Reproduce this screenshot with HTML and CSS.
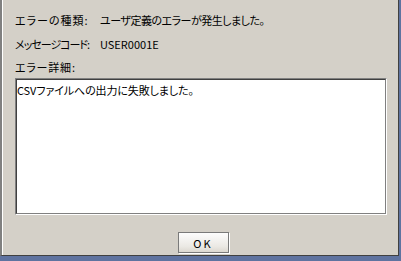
FILE: index.html
```html
<!DOCTYPE html>
<html lang="ja">
<head>
    <meta charset="UTF-8">
    <meta name="viewport" content="width=device-width, initial-scale=1.0">
    <title>エラー</title>
    <link rel="stylesheet" href="styles.css">
</head>
<body>
    <div class="frame">
        <div class="dialog">
            <div class="info">
                <span class="label label-wide">エラーの種類:</span>
                <span class="value value-tight">ユーザ定義のエラーが発生しました。</span>
                <span class="label label-tight">メッセージコード:</span>
                <span class="value">USER0001E</span>
            </div>
            <div class="detail-label">エラー詳細:</div>
            <div class="detail-box">
                <div class="detail-text">CSVファイルへの出力に失敗しました。</div>
            </div>
            <div class="buttons">
                <button type="button" class="btn">OK</button>
            </div>
        </div>
    </div>
</body>
</html>
```

FILE: styles.css
```css
body {
    margin: 0;
    padding: 0;
    background-color: #5f73a0;
    font-family: "Noto Sans CJK JP", "Noto Sans", sans-serif;
    font-size: 11px;
    font-feature-settings: "palt";
    color: #000;
}
.frame {
    width: 401px;
    height: 261px;
    background-color: #5f73a0;
    padding: 0 2px 5px 0;
    box-sizing: border-box;
}
.dialog {
    height: 100%;
    box-sizing: border-box;
    background-color: #d4d0c8;
    border-left: 2px solid #808080;
    border-right: 1px solid #404040;
    border-bottom: 1px solid #404040;
    box-shadow: inset 1px 0 #fff;
    padding: 8px 11px 0 13px;
    display: flex;
    flex-direction: column;
}
.info {
    display: grid;
    grid-template-columns: 85px 1fr;
    line-height: 24px;
    white-space: nowrap;
}
.label-wide {
    letter-spacing: 1px;
}
.label-tight {
    letter-spacing: -1px;
}
.value-tight {
    letter-spacing: -0.5px;
}
.detail-label {
    line-height: 22px;
    letter-spacing: 0.8px;
}
.detail-box {
    height: 137px;
    box-sizing: border-box;
    border: 1px solid;
    border-color: #808080 #fff #fff #808080;
}
.detail-text {
    height: 100%;
    box-sizing: border-box;
    background-color: #fff;
    border: 1px solid;
    border-color: #404040 #808080 #808080 #404040;
    padding: 2px 0;
    line-height: 16px;
    letter-spacing: -0.1px;
}
.buttons {
    display: flex;
    justify-content: center;
    padding: 17px 0 0 4px;
}
.btn {
    width: 51px;
    height: 21px;
    padding: 0;
    font-family: "Noto Sans CJK JP", "Noto Sans", sans-serif;
    font-size: 11px;
    letter-spacing: 2px;
    color: #000;
    border: 1px solid #7a7a7a;
    background: linear-gradient(#fdfdfd, #ebe9e4 70%, #dcd8d0);
    box-shadow: 1px 1px 0 #fff;
}
```
